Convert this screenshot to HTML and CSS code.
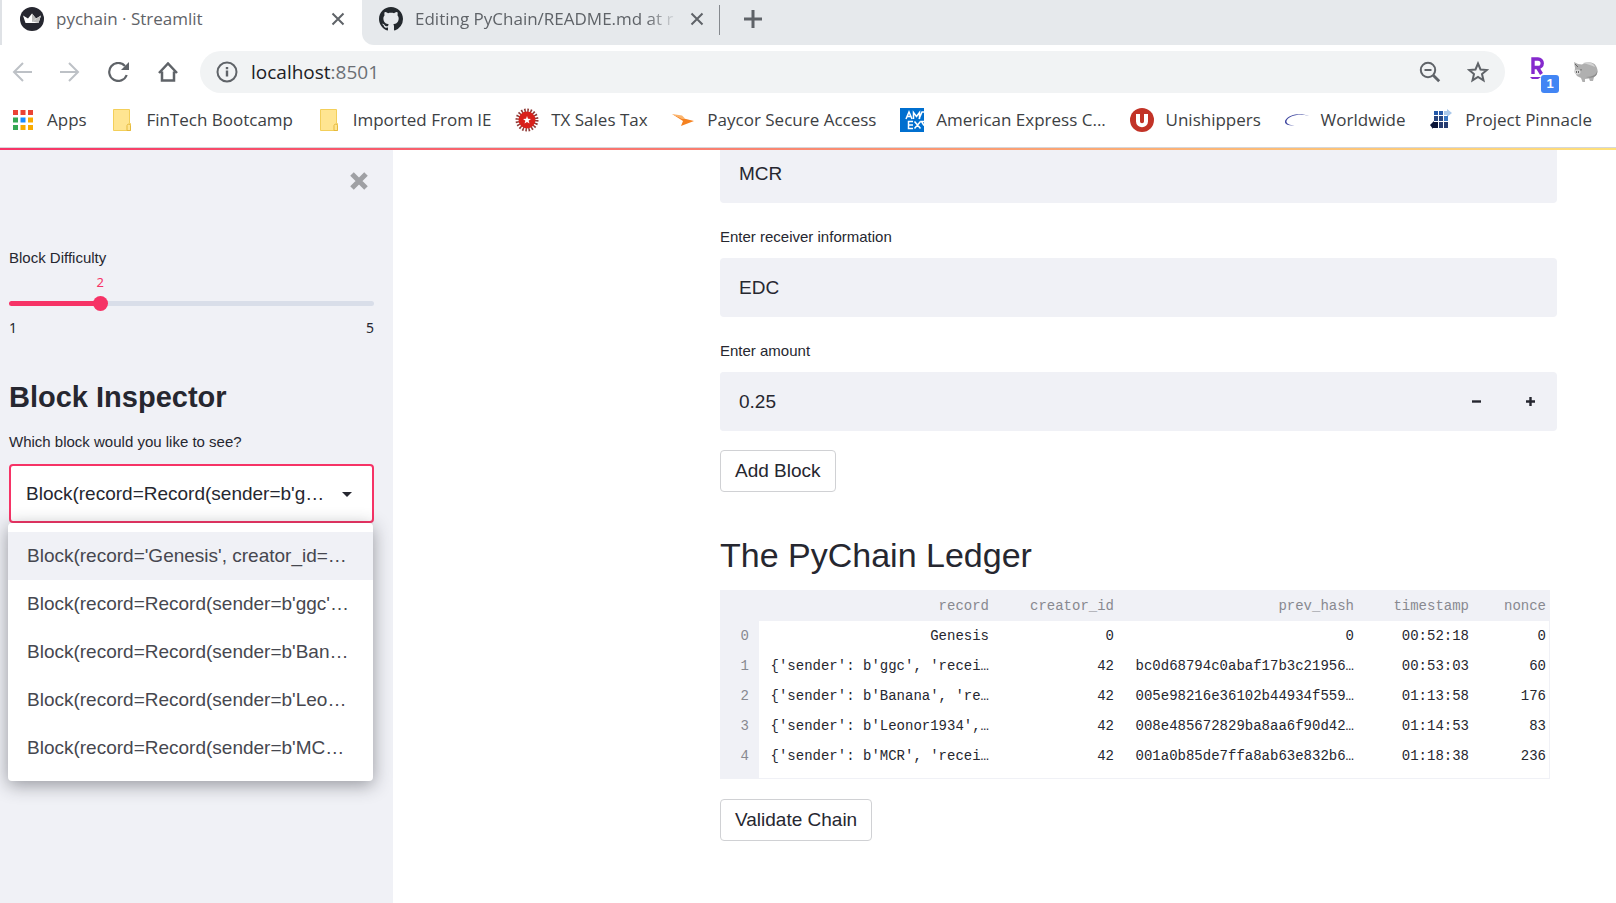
FILE: index.html
```html
<!DOCTYPE html>
<html lang="en">
<head>
<meta charset="utf-8">
<title>pychain · Streamlit</title>
<link rel="stylesheet" href="styles.css">
</head>
<body>
<header class="browser">
  <div class="tabs">
    <div class="tab tab-active">
      <svg class="fav" viewBox="0 0 24 24"><circle cx="12" cy="12" r="12" fill="#262730"/><path d="M3 8.500l5 3 4-5 4 5 5-3-2.500 7.500h-13z" fill="#fff"/><path d="M12 6.500l4 5-4 3.500zM21 8.500l-2.500 7.500-6-1.500z" fill="#bbb"/></svg>
      <span class="tab-title">pychain · Streamlit</span>
      <button class="plain" aria-label="Close tab"><svg width="14" height="14" viewBox="0 0 14 14"><path d="M1.500 1.500l11 11M12.500 1.500l-11 11" stroke="#5f6368" stroke-width="2"/></svg></button>
    </div>
    <div class="tab tab-back">
      <svg class="fav" viewBox="0 0 16 16"><path fill="#24292e" d="M8 0C3.580 0 0 3.580 0 8c0 3.540 2.290 6.530 5.470 7.590.4.070.55-.17.55-.38 0-.19-.01-.82-.01-1.490-2.010.37-2.530-.49-2.690-.94-.09-.23-.48-.94-.82-1.130-.28-.15-.68-.52-.01-.53.63-.01 1.080.58 1.230.82.72 1.210 1.870.87 2.330.66.07-.52.28-.87.51-1.070-1.780-.2-3.640-.89-3.640-3.950 0-.87.31-1.590.82-2.150-.08-.2-.36-1.020.08-2.120 0 0 .67-.21 2.200.82.64-.18 1.320-.27 2-.27s1.360.09 2 .27c1.530-1.040 2.200-.82 2.200-.82.44 1.100.16 1.920.08 2.120.51.56.82 1.270.82 2.150 0 3.070-1.870 3.750-3.650 3.950.29.25.54.73.54 1.480 0 1.070-.01 1.930-.01 2.200 0 .21.15.46.55.38A8.010 8.010 0 0 0 16 8c0-4.420-3.580-8-8-8z"/></svg>
      <span class="tab-title tab-fade">Editing PyChain/README.md at r</span>
      <button class="plain" aria-label="Close tab"><svg width="14" height="14" viewBox="0 0 14 14"><path d="M1.500 1.500l11 11M12.500 1.500l-11 11" stroke="#5f6368" stroke-width="2"/></svg></button>
    </div>
    <button class="plain new-tab" aria-label="New tab"><svg width="18" height="18" viewBox="0 0 18 18"><path d="M9 0v18M0 9h18" stroke="#5f6368" stroke-width="3"/></svg></button>
  </div>
  <div class="toolbar">
    <nav class="nav">
      <button class="plain" aria-label="Back"><svg width="20" height="20" viewBox="0 0 20 20" fill="none" stroke="#bdc1c6" stroke-width="2"><path d="M20 10H2M11 1l-9 9 9 9"/></svg></button>
      <button class="plain" aria-label="Forward"><svg width="20" height="20" viewBox="0 0 20 20" fill="none" stroke="#bdc1c6" stroke-width="2"><path d="M0 10h18M9 1l9 9-9 9"/></svg></button>
      <button class="plain" aria-label="Reload"><svg width="22" height="20" viewBox="0 0 22 20"><path d="M18.700 13A9 9 0 1 1 17 4" fill="none" stroke="#5f6368" stroke-width="2.200"/><path d="M21 0v8h-8z" fill="#5f6368"/></svg></button>
      <button class="plain" aria-label="Home"><svg width="20" height="20" viewBox="0 0 20 20" fill="none" stroke="#5f6368" stroke-width="2.500"><path d="M1 11l9-9.500 9 9.500M4 9.500v9h12v-9"/></svg></button>
    </nav>
    <div class="omnibox">
      <svg width="22" height="22" viewBox="0 0 22 22"><circle cx="11" cy="11" r="9.500" fill="none" stroke="#5f6368" stroke-width="2"/><path d="M11 9.500v6M11 6v2.200" stroke="#5f6368" stroke-width="2.400"/></svg>
      <span class="url">localhost<span class="port">:8501</span></span>
      <button class="plain" aria-label="Zoom"><svg width="22" height="22" viewBox="0 0 22 22" fill="none" stroke="#5f6368" stroke-width="2"><circle cx="9" cy="9" r="7.200"/><path d="M5.500 9h7"/><path d="M14.200 14.200l6 6" stroke-width="2.800"/></svg></button>
      <button class="plain" aria-label="Bookmark this page"><svg width="22" height="22" viewBox="0 0 22 22"><path d="M11 2.500l2.500 6 6.300.5-4.800 4.100 1.500 6.200-5.500-3.300-5.500 3.300L7 13.100 2.200 9l6.300-.5z" fill="none" stroke="#5f6368" stroke-width="2"/></svg></button>
    </div>
    <button class="plain ext" aria-label="Rakuten">
      <svg width="30" height="32" viewBox="0 0 30 32"><path d="M4 18V3h5a4 4 0 0 1 0 8.500H4M8.500 11.500l4 6.500" fill="none" stroke="#8529cd" stroke-width="3.400"/><path d="M1 21h11l-3 2H3z" fill="#8529cd"/></svg>
      <span class="badge">1</span>
    </button>
    <button class="plain" aria-label="Piggy"><svg width="26" height="22" viewBox="0 0 26 22"><path d="M1 1l4 2 4 .5C14 0 21 1 23 5c3 5 1 9-2 11l-1 4h-3l-1-2.500-4 .5v3H9.500L8 17l-4-2-2.500-4L2 7z" fill="#b0b0b0"/><path d="M10 2c5-2 11 0 12 4-4-2-8-3-12-4z" fill="#d4d4d4"/><ellipse cx="4.500" cy="11" rx="3" ry="2.400" fill="#d6d6d6"/><path d="M3.500 10v2M5.500 10v2M8 8v1.500M2 3l3 3" stroke="#666"/><path d="M24 8c1 5-4 8-11 8 6 2 13 0 11-8z" fill="#8d8d8d"/></svg></button>
  </div>
  <nav class="bookmarks">
    <a href="#"><svg class="bm" viewBox="0 0 24 24"><path d="M2 2h5v5H2zM9.500 2h5v5h-5zM17 2h5v5h-5z" fill="#ea4335"/><path d="M2 9.500h5v5H2zM2 17h5v5H2z" fill="#34a853"/><path d="M9.500 9.500h5v5h-5z" fill="#1a8cff"/><path d="M17 9.500h5v5h-5zM9.500 17h5v5h-5zM17 17h5v5h-5z" fill="#f9ab00"/></svg>Apps</a>
    <a href="#"><svg class="bm" viewBox="0 0 24 24"><path d="M3.500 1.500h16v14h1v7h-17z" fill="#ffe591" stroke="#f3cf5a"/><path d="M17 22.500v-5a1.800 1.800 0 0 1 3.500 0v5z" fill="#ffe591" stroke="#e5b93c"/></svg>FinTech Bootcamp</a>
    <a href="#"><svg class="bm" viewBox="0 0 24 24"><path d="M3.500 1.500h16v14h1v7h-17z" fill="#ffe591" stroke="#f3cf5a"/><path d="M17 22.500v-5a1.800 1.800 0 0 1 3.500 0v5z" fill="#ffe591" stroke="#e5b93c"/></svg>Imported From IE</a>
    <a href="#"><svg class="bm" viewBox="0 0 24 24"><circle cx="12" cy="12" r="9.500" fill="none" stroke="#8f3a36" stroke-width="4" stroke-dasharray="1.500 1.484"/><circle cx="12" cy="12" r="8.500" fill="#d8201a"/><path d="M12 8l1 2.800 3 .1-2.400 1.800.9 2.900-2.500-1.700-2.500 1.700.9-2.900L8 10.900l3-.1z" fill="#fff"/></svg>TX Sales Tax</a>
    <a href="#"><svg class="bm" viewBox="0 0 24 24"><path d="M1 6l10 4 12 3-13 5 2-5z" fill="#f58220"/><path d="M1 6l10 1.500 3 3-3 .5z" fill="#fbb36b"/></svg>Paycor Secure Access</a>
    <a href="#"><svg class="bm" viewBox="0 0 24 24"><path fill="#006fcf" d="M0 0h24v24H0z"/><path d="M6 11l3-7 3 7M7 8.500h4M13.500 11V4.500l3 4 3-4V11M19 11l3-7h2M13 13.500H8.500v7H13M8.500 17H13M14.500 13.500l6 7M20.500 13.500l-6 7M24 13.500h-2.500l2.500 4" fill="none" stroke="#fff" stroke-width="1.500"/></svg>American Express C...</a>
    <a href="#"><svg class="bm" viewBox="0 0 24 24"><circle cx="12" cy="12" r="12" fill="#c23327"/><path d="M8 6v7.500c0 5 8 5 8 0V6" fill="none" stroke="#fff" stroke-width="4"/></svg>Unishippers</a>
    <a href="#"><svg class="bm" viewBox="0 0 24 24"><path d="M24 8C14 5 3 8 1.500 13c-.5 2.500 3 4 8 4.500-8 .5-11-2.500-9-5.500C4 6 16 4.500 24 8z" fill="#3f47a0"/></svg>Worldwide</a>
    <a href="#"><svg class="bm" viewBox="0 0 24 24"><path d="M5 3h4v4H5zM10 3h4v4h-4z" fill="#2459a9"/><path d="M15 3h3V1l5 4-5 4v-2h-3z" fill="#a9c8ea"/><path d="M5 8h4v5H5zM10 8h4v5h-4z" fill="#27457f"/><path d="M15 8h4v5h-4z" fill="#3a78c4"/><path d="M10 14h4v6h-4zM15 14h4v6h-4z" fill="#263c72"/><path d="M9 14H5v-1l-4 4 3 4v-1h5z" fill="#0b1538"/></svg>Project Pinnacle</a>
  </nav>
</header>
<div class="app">
  <div class="decoration"></div>
  <aside class="sidebar">
    <button class="plain close" aria-label="Close sidebar"><svg width="18" height="18" viewBox="0 0 18 18"><path d="M2 2l14 14M16 2L2 16" stroke="#9fa0a4" stroke-width="5"/></svg></button>
    <label class="label" for="difficulty">Block Difficulty</label>
    <div class="slider">
      <output class="slider-value" for="difficulty">2</output>
      <div class="slider-track"></div>
      <input id="difficulty" class="slider-input" type="range" min="1" max="5" value="2">
    </div>
    <div class="ticks"><span>1</span><span>5</span></div>
    <h2 class="side-title">Block Inspector</h2>
    <label class="label" for="block">Which block would you like to see?</label>
    <div class="select-box">
      <select id="block" class="select"><option>Block(record=Record(sender=b'g…</option></select>
      <svg class="caret" width="10" height="5" viewBox="0 0 10 5"><path d="M0 0h10L5 5z" fill="#262730"/></svg>
      <ul class="menu" role="listbox" aria-label="Blocks">
        <li role="option" class="option option-active" aria-selected="true">Block(record='Genesis', creator_id=…</li>
        <li role="option" class="option">Block(record=Record(sender=b'ggc'…</li>
        <li role="option" class="option">Block(record=Record(sender=b'Ban…</li>
        <li role="option" class="option">Block(record=Record(sender=b'Leo…</li>
        <li role="option" class="option">Block(record=Record(sender=b'MC…</li>
      </ul>
    </div>
  </aside>
  <main class="main">
    <input class="field" aria-label="Enter sender information" type="text" value="MCR">
    <label class="label field-label" for="receiver">Enter receiver information</label>
    <input class="field" id="receiver" type="text" value="EDC">
    <label class="label field-label" for="amount">Enter amount</label>
    <div class="number">
      <input class="field" id="amount" type="text" value="0.25">
      <button class="plain step" aria-label="Decrease"><svg width="9" height="9" viewBox="0 0 9 9"><path d="M0 4.500h9" stroke="#262730" stroke-width="2.400"/></svg></button>
      <button class="plain step" aria-label="Increase"><svg width="9" height="9" viewBox="0 0 9 9"><path d="M0 4.500h9M4.500 0v9" stroke="#262730" stroke-width="2.400"/></svg></button>
    </div>
    <button class="button">Add Block</button>
    <h1 class="title">The PyChain Ledger</h1>
    <div class="table-box">
    <table class="ledger">
      <colgroup><col class="c-index"><col class="c-wide"><col class="c-id"><col class="c-wide"><col class="c-time"><col></colgroup>
      <thead><tr><th></th><th>record</th><th>creator_id</th><th>prev_hash</th><th>timestamp</th><th>nonce</th></tr></thead>
      <tbody>
        <tr><th>0</th><td>Genesis</td><td>0</td><td>0</td><td>00:52:18</td><td>0</td></tr>
        <tr><th>1</th><td>{'sender': b'ggc', 'recei…</td><td>42</td><td>bc0d68794c0abaf17b3c21956…</td><td>00:53:03</td><td>60</td></tr>
        <tr><th>2</th><td>{'sender': b'Banana', 're…</td><td>42</td><td>005e98216e36102b44934f559…</td><td>01:13:58</td><td>176</td></tr>
        <tr><th>3</th><td>{'sender': b'Leonor1934',…</td><td>42</td><td>008e485672829ba8aa6f90d42…</td><td>01:14:53</td><td>83</td></tr>
        <tr><th>4</th><td>{'sender': b'MCR', 'recei…</td><td>42</td><td>001a0b85de7ffa8ab63e832b6…</td><td>01:18:38</td><td>236</td></tr>
      </tbody>
    </table>
    </div>
    <button class="button">Validate Chain</button>
  </main>
</div>
</body>
</html>
```
FILE: styles.css
```css
* { box-sizing: border-box; }
html, body { height: 100%; }
body {
  margin: 0;
  display: flex;
  flex-direction: column;
  overflow: hidden;
  background: #fff;
  color: #262730;
  font-family: "Liberation Sans", Arial, sans-serif;
}
svg { display: block; flex: none; }
.plain { border: 0; padding: 0; background: none; flex: none; }

.browser {
  flex: none;
  font-family: "Open Sans", "Noto Sans", sans-serif;
  border-bottom: 1px solid #d5d7db;
}
.tabs { display: flex; height: 45px; background: #e6e9ec; }
.tab { display: flex; align-items: center; gap: 12px; padding-bottom: 8px; font-size: 17px; color: #5f6368; white-space: nowrap; }
.tab-active { width: 374px; padding-left: 18px; padding-right: 29px; background: #fff; border-left: 2px solid #dfe2e6; margin-right: -12px; }
.tab-back { width: 358px; padding-left: 17px; padding-right: 16px; position: relative; background: #e6e9ec; border-bottom-left-radius: 12px; }
.tab-back::after { content: ""; position: absolute; right: 0; top: 5px; width: 1px; height: 30px; background: #85898e; }
.tab-title { flex: 1; }
.tab-fade { -webkit-mask-image: linear-gradient(to right, #000 88%, transparent); mask-image: linear-gradient(to right, #000 88%, transparent); }
.fav, .bm { width: 24px; height: 24px; }
.new-tab { padding: 0 24px 7px; }

.toolbar { display: flex; align-items: center; height: 54px; padding-right: 17px; }
.nav { display: flex; gap: 28px; width: 200px; padding-left: 12px; }
.omnibox { flex: 1; display: flex; align-items: center; height: 42px; padding: 0 16px; border-radius: 21px; background: #f1f3f4; gap: 26px; }
.url { flex: 1; margin-left: -13px; font-size: 19px; color: #202124; }
.port { color: #6b6f74; }
.ext { position: relative; width: 30px; height: 32px; margin: 0 14px 0 24px; }
.badge { position: absolute; right: 0; bottom: -5px; width: 18px; height: 18px; border-radius: 3px; background: #4285f4; color: #fff; font-size: 13px; font-weight: 700; line-height: 18px; }

.bookmarks { display: flex; justify-content: space-between; height: 48px; padding: 0 24px 7px 11px; }
.bookmarks a { display: flex; align-items: center; gap: 12px; color: #3c4043; font-size: 17px; text-decoration: none; white-space: nowrap; }

.app { flex: 1; min-height: 0; display: flex; position: relative; overflow: hidden; }
.decoration { position: absolute; top: 0; left: 0; right: 0; height: 2px; background: linear-gradient(90deg, #f63366, #fffd80 116%); z-index: 2; }
.sidebar { flex: none; width: 393px; padding: 24px 19px 0 9px; background: #f0f1f6; }
.close { display: block; margin: 0 6px 56px auto; }
.label { display: block; font-size: 15px; line-height: 24px; }
.slider { display: grid; font-family: "Noto Sans", sans-serif; }
.slider-value { width: 20px; margin-left: calc(25% - 10px); font-size: 13px; line-height: 20px; text-align: center; color: #f63366; padding: 2px 0 1px; }
.slider-track { grid-row: 2; grid-column: 1; align-self: center; height: 5px; border-radius: 3px; background: linear-gradient(90deg, #f63366 25%, #d9dee9 25%); }
.slider-input { grid-row: 2; grid-column: 1; margin: 0 -8px; height: 20px; appearance: none; background: none; }
.slider-input::-webkit-slider-thumb { appearance: none; width: 15px; height: 15px; border-radius: 50%; background: #f63366; }
.ticks { display: flex; justify-content: space-between; margin-top: 4px; font-family: "Noto Sans", sans-serif; font-size: 14px; line-height: 22px; }
.side-title { margin: 40px 0 15px; font-size: 29px; line-height: 36px; }
.select-box { position: relative; margin-top: 10px; }
.select { display: block; width: 100%; height: 59px; padding: 0 40px 0 15px; border: 2px solid #f63366; border-radius: 4px; background: #fff; appearance: none; color: inherit; font: 19px "Liberation Sans", Arial, sans-serif; }
.caret { position: absolute; right: 22px; top: 28px; }
.menu { position: absolute; top: 59px; left: -1px; width: 100%; margin: 0; padding: 9px 0; border-radius: 4px; background: #fff; list-style: none; box-shadow: 0 4px 18px rgba(38, 39, 48, .45); }
.option { padding: 0 19px; font-size: 19px; line-height: 48px; white-space: nowrap; color: #46474f; }
.option-active { background: #f0f1f6; }

.main { flex: 1; min-width: 0; margin-top: -4px; padding: 0 59px 0 327px; }
.field { display: block; width: 100%; height: 59px; padding: 0 19px; border: 0; border-radius: 4px; background: #f0f1f6; color: #262730; font: 19px "Liberation Sans", Arial, sans-serif; }
.field-label { padding: 22px 0 9px; }
.number { display: flex; background: #f0f1f6; border-radius: 4px; }
.step { display: flex; align-items: center; justify-content: center; width: 54px; }
.button { display: block; height: 42px; margin-top: 19px; padding: 0 14px; border: 1px solid #d0d1d4; border-radius: 4px; background: #fff; color: #262730; font: 19px "Liberation Sans", Arial, sans-serif; }
.title { margin: 41px 0 13px; font-size: 34px; line-height: 44px; font-weight: 400; }
.table-box { height: 189px; margin-right: 7px; margin-bottom: 20px; border: 1px solid #f0f1f6; border-width: 0 1px 1px 0; background: linear-gradient(90deg, #f0f1f6 39px, #fff 39px); }
.ledger { width: 100%; table-layout: fixed; border-collapse: collapse; font: 14px "Liberation Mono", "Courier New", monospace; }
.ledger th, .ledger td { height: 30px; padding: 0 10px; text-align: right; font-weight: 400; white-space: nowrap; }
.ledger th { background: #f0f1f6; color: #888990; }
.ledger thead th { height: 31px; }
.ledger tr > :last-child { padding-right: 3px; }
.c-index { width: 39px; }
.c-wide { width: 240px; }
.c-id { width: 125px; }
.c-time { width: 115px; }
```
